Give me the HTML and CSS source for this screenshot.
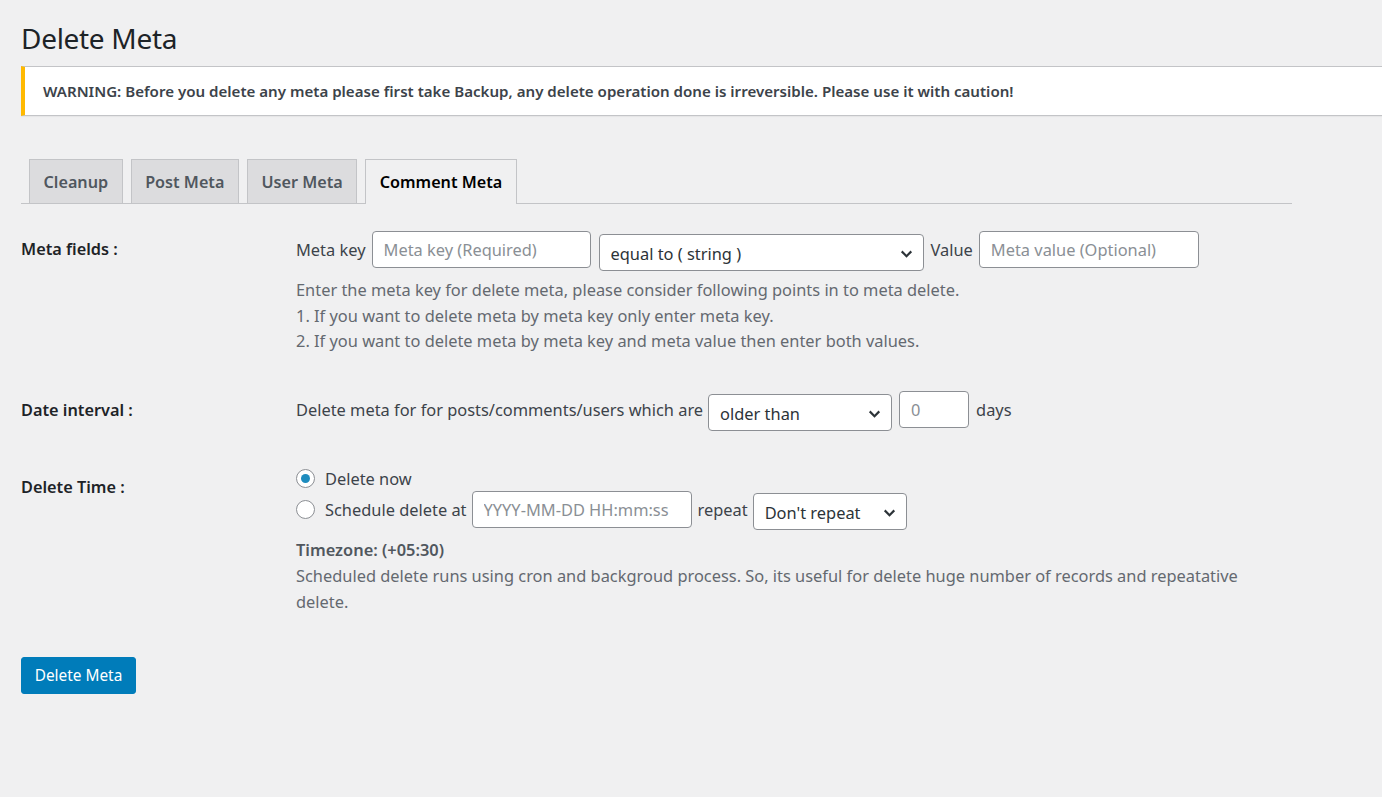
FILE: index.html
```html
<!DOCTYPE html>
<html>
<head>
<meta charset="utf-8">
<title>Delete Meta</title>
<link rel="stylesheet" href="styles.css">
</head>
<body>
<div class="wrap">
  <h1 class="title">Delete Meta</h1>
  <div class="notice">WARNING: Before you delete any meta please first take Backup, any delete operation done is irreversible. Please use it with caution!</div>

  <nav class="tabs">
    <a class="tab">Cleanup</a>
    <a class="tab">Post Meta</a>
    <a class="tab">User Meta</a>
    <a class="tab active">Comment Meta</a>
  </nav>

  <div class="form">
    <div class="row row-meta">
      <div class="th">Meta fields :</div>
      <div class="td">
        <div class="line">
          <span class="lbl">Meta key</span>
          <input class="field f-key" type="text" placeholder="Meta key (Required)">
          <div class="select s-op">equal to ( string )<svg class="chev" viewBox="0 0 16 16"><path d="M3.5 6l4.5 4.5L12.5 6" /></svg></div>
          <span class="lbl l-value">Value</span>
          <input class="field f-val" type="text" placeholder="Meta value (Optional)">
        </div>
        <p class="desc">Enter the meta key for delete meta, please consider following points in to meta delete.<br>1. If you want to delete meta by meta key only enter meta key.<br>2. If you want to delete meta by meta key and meta value then enter both values.</p>
      </div>
    </div>

    <div class="row row-date">
      <div class="th">Date interval :</div>
      <div class="td">
        <div class="line">
          <span class="lbl">Delete meta for for posts/comments/users which are</span>
          <div class="select s-older">older than<svg class="chev" viewBox="0 0 16 16"><path d="M3.5 6l4.5 4.5L12.5 6" /></svg></div>
          <input class="field f-days" type="text" placeholder="0">
          <span class="lbl l-days">days</span>
        </div>
      </div>
    </div>

    <div class="row row-time">
      <div class="th">Delete Time :</div>
      <div class="td">
        <label class="radio-line"><span class="radio checked"></span><span class="lbl">Delete now</span></label>
        <div class="line line-sched">
          <span class="radio r2"></span><span class="lbl">Schedule delete at</span>
          <input class="field f-date" type="text" placeholder="YYYY-MM-DD HH:mm:ss">
          <span class="lbl l-repeat">repeat</span>
          <div class="select s-repeat">Don't repeat<svg class="chev" viewBox="0 0 16 16"><path d="M3.5 6l4.5 4.5L12.5 6" /></svg></div>
        </div>
        <p class="tz">Timezone: (+05:30)</p>
        <p class="desc desc2">Scheduled delete runs using cron and backgroud process. So, its useful for delete huge number of records and repeatative delete.</p>
      </div>
    </div>
  </div>

  <button class="btn">Delete Meta</button>
</div>
</body>
</html>
```
FILE: styles.css
```css
html, body {
  margin: 0;
  padding: 0;
  background: #f0f0f1;
  overflow: hidden;
}
body {
  font-family: "Noto Sans", "Open Sans", sans-serif;
  color: #3c434a;
  font-size: 16.4px;
  height: 797px;
}
.wrap {
  width: 1271px;
  padding-left: 21px;
}
.title {
  margin: 0;
  padding-top: 18px;
  height: 48px;
  box-sizing: border-box;
  font-size: 28px;
  line-height: 40px;
  font-weight: 400;
  color: #1d2327;
  letter-spacing: -0.3px;
}
.notice {
  margin-right: -200px;
  height: 50px;
  box-sizing: border-box;
  background: #fff;
  border: 1px solid #c3c4c7;
  border-left: 4px solid #ffb900;
  box-shadow: 0 1px 1px rgba(0,0,0,0.04);
  display: flex;
  align-items: center;
  padding-left: 18px;
  font-size: 15.1px;
  font-weight: 600;
  color: #3c434a;
  margin-top: 18px;
}
.tabs {
  display: flex;
  gap: 8px;
  margin-top: 43px;
  padding-left: 8px;
  border-bottom: 1px solid #c3c4c7;
  height: 44px;
}
.tab {
  display: flex;
  align-items: center;
  padding: 0 13.5px;
  border: 1px solid #c3c4c7;
  border-bottom: none;
  background: #dcdcde;
  font-size: 16.2px;
  font-weight: 600;
  color: #50575e;
  box-sizing: border-box;
  height: 44px;
}
.tab.active {
  background: #f0f0f1;
  color: #000;
  height: 45px;
  margin-bottom: -1px;
}
.form {
  display: flex;
  flex-direction: column;
}
.row {
  display: flex;
}
.th {
  width: 275px;
  flex: none;
  font-size: 16.3px;
  line-height: 24px;
  font-weight: 600;
  color: #1d2327;
}
.td {
  flex: 1;
  padding-right: 10px;
  color: #3c434a;
}
.row-meta { margin-top: 27px; }
.row-meta .th { padding-top: 6px; }
.row-date { margin-top: 37px; }
.row-date .th { padding-top: 7px; }
.row-time { margin-top: 36px; }
.row-time .th { padding-top: 8px; }

.line {
  display: flex;
  align-items: flex-start;
}
.lbl { white-space: nowrap; line-height: 37px; }
.field {
  box-sizing: border-box;
  height: 37px;
  border: 1px solid #8c8f94;
  border-radius: 4px;
  background: #fff;
  padding: 0 11px;
  font-family: inherit;
  font-size: 16.4px;
  color: #2c3338;
  outline: none;
}
.field::placeholder { color: #8a8f95; }
.select {
  box-sizing: border-box;
  height: 37px;
  border: 1px solid #8c8f94;
  border-radius: 4px;
  background: #fff;
  display: flex;
  align-items: center;
  justify-content: space-between;
  padding: 2px 8px 0 11px;
  font-size: 16.4px;
  color: #2c3338;
  white-space: nowrap;
}
.chev {
  width: 17px;
  height: 17px;
  flex: none;
}
.chev path {
  fill: none;
  stroke: #2c3338;
  stroke-width: 2;
}
.f-key { width: 219px; margin-left: 6px; }
.s-op { width: 325px; margin-left: 8px; margin-top: 3px; }
.l-value { margin-left: 7px; }
.f-val { width: 220px; margin-left: 6px; }

.s-older { width: 184px; margin-left: 5px; margin-top: 3px; }
.f-days { width: 70px; margin-left: 7px; }
.l-days { margin-left: 7px; }

.desc {
  margin: 6px 0 0;
  line-height: 25.5px;
  color: #646970;
}
.radio-line {
  display: flex;
  align-items: center;
  height: 24px;
}
.radio {
  box-sizing: border-box;
  width: 19px;
  height: 19px;
  border-radius: 50%;
  border: 1px solid #8c8f94;
  background: #fff;
  margin-right: 10px;
  flex: none;
  position: relative;
}
.radio.r2 { margin-top: 9px; }
.radio.checked::after {
  content: "";
  position: absolute;
  left: 4px;
  top: 4px;
  width: 9px;
  height: 9px;
  border-radius: 50%;
  background: #1e8cbe;
}
.f-date { width: 220px; margin-left: 5px; }
.l-repeat { margin-left: 6px; }
.s-repeat { width: 154px; margin-left: 5px; margin-top: 2px; }

.tz {
  margin: 8px 0 0;
  font-weight: 600;
  line-height: 24px;
  color: #50575e;
}
.desc2 { margin-top: 1px; line-height: 26px; }

.btn {
  margin-top: 42px;
  width: 115px;
  height: 37px;
  background: #007cba;
  border: 1px solid #007cba;
  border-radius: 3px;
  color: #fff;
  font-family: inherit;
  font-size: 15.4px;
  padding: 0;
}
```
